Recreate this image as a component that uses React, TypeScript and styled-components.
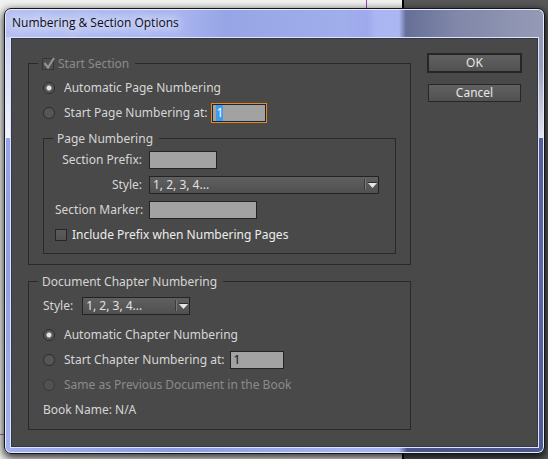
import React, { useEffect, useRef } from "react";
import styled, { createGlobalStyle, css } from "styled-components";

const GlobalStyle = createGlobalStyle`
  *, *::before, *::after { box-sizing: border-box; }
  body { margin: 0; }
  body, button, input, select {
    font-family: "Noto Sans", sans-serif;
    font-size: 12px;
    line-height: 16px;
  }
`;

const Backdrop = styled.div`
  display: flex;
  min-height: 100vh;
  padding: 8px 3px 5px 4px;
  background:
    linear-gradient(90deg, transparent 366px, #9a3fb4 366px 367px, transparent 367px) 0 0 / 100% 9px no-repeat,
    linear-gradient(transparent 434px, #b160c4 434px 435px, transparent 435px) 0 0 / 5px 100% no-repeat,
    linear-gradient(90deg, #f1f1ef 402px, #000 402px 404px, #585858 404px);
`;

const Dialog = styled.section`
  flex: 1;
  display: flex;
  flex-direction: column;
  min-width: 0;
  padding: 0 5px 5px;
  border: 1px solid #14161f;
  border-radius: 7px;
  background:
    linear-gradient(#cdd3f4, #f2f3fb 101px, #94a4e6 101px, #8f9fe0 232px, #a7b5f0) 0 28px / 6px 100% no-repeat,
    linear-gradient(#949ab8, #9aa0ba 30px, #e2e4ee 101px, #525f98 101px, #5b68a4 232px, #4c5890) 100% 28px / 6px 100% no-repeat,
    linear-gradient(90deg, #a3b1ee, #8b9be0 170px, #a5b3f0 340px, #a5b3f0 394px, #4b5688 402px, #4d588c) 0 100% / 100% 6px no-repeat,
    linear-gradient(90deg, #b5c0f2, #aab6f0 170px, #97a5e6 220px, #a0aeec 340px, #9fa8ec 362px, #a9b6f2 370px, #aab7f2 394px, #666f98 401px, #8087a8 450px, #959bb6);
  box-shadow: inset 0 0 0 1px #e8ebfb, 0 3px 8px 1px rgba(0, 0, 0, 0.8);
`;

const TitleBar = styled.header`
  display: flex;
  align-items: center;
  height: 28px;
  padding: 0 2px;
`;

const Title = styled.h1`
  margin: 0;
  font: 400 12px/16px "Open Sans", "Noto Sans", sans-serif;
  color: #0b0c14;
  text-shadow: 0 0 8px #e6eafd, 0 0 10px #e6eafd, 0 0 12px #e6eafd;
`;

const Body = styled.form`
  flex: 1;
  display: flex;
  align-items: flex-start;
  gap: 16px;
  padding: 15px 16px 14px 17px;
  border: 1px solid #dfe4fa;
  background: #494949;
  box-shadow: inset 0 0 0 1px #33374a;
  color: #d6d6d6;
`;

const Options = styled.div`
  flex: 1;
  min-width: 0;
  display: flex;
  flex-direction: column;
  gap: 8px;
  padding-top: 2px;
`;

const Group = styled.fieldset<{ $nested?: boolean }>`
  min-width: 0;
  margin: ${(p) => (p.$nested ? "5px 0 3px" : "0")};
  padding: ${(p) => (p.$nested ? "0 11px 6px" : "3px 14px 7px")};
  border: 1px solid #292929;
`;

const Legend = styled.legend<{ $nested?: boolean }>`
  display: flex;
  align-items: center;
  gap: 4px;
  height: 17px;
  margin-left: ${(p) => (p.$nested ? "-2px" : "-5px")};
  padding: 0 6px 0 4px;
  white-space: nowrap;
`;

const Row = styled.div<{ $gap?: number }>`
  display: flex;
  align-items: center;
  gap: ${(p) => p.$gap ?? 5}px;
  height: 25px;
`;

const RadioGroup = styled.div`
  padding-top: 4px;
`;

const Label = styled.label<{ $dim?: boolean; $bright?: boolean }>`
  color: ${(p) => (p.$dim ? "#8b8b8b" : p.$bright ? "#ededed" : "#d6d6d6")};
  white-space: nowrap;
`;

const FieldLabel = styled(Label)`
  width: 87px;
  text-align: right;
`;

const Radio = styled.input.attrs({ type: "radio" })`
  appearance: none;
  flex: none;
  width: 12px;
  height: 12px;
  margin: 0 4px 0 0;
  border: 1px solid #2c2c2c;
  border-radius: 50%;
  background: #565656;
  &:checked {
    background: radial-gradient(circle, #e4e4e4 0 2px, #585858 3px);
  }
  &:disabled {
    border-color: #3a3a3a;
    background: #505050;
  }
`;

const CheckFrame = styled.span`
  position: relative;
  display: flex;
  flex: none;
`;

const CheckInput = styled.input.attrs({ type: "checkbox" })`
  appearance: none;
  width: 12px;
  height: 12px;
  margin: 0;
  border: 1px solid #262626;
  background: linear-gradient(#5c5c5c, #525252);
  &:disabled {
    border-color: #363636;
    background: #4d4d4d;
  }
`;

const Tick = styled.svg`
  position: absolute;
  left: 0;
  top: -2px;
  width: 14px;
  height: 14px;
  pointer-events: none;
`;

const fieldBox = css`
  height: 18px;
  margin: 0;
  border: 1px solid #232323;
  border-radius: 0;
  outline: none;
`;

const TextField = styled.input.attrs({ type: "text" })<{ $width: number }>`
  ${fieldBox}
  width: ${(p) => p.$width}px;
  padding: 0 3px;
  background: #a2a2a2;
  color: #10101c;
  &:focus { box-shadow: 0 0 0 1px #e28a2b; }
  &::selection { background: #3f9bf0; color: #fff; }
`;

const SelectFrame = styled.span<{ $width: number }>`
  position: relative;
  display: flex;
  width: ${(p) => p.$width}px;
`;

const Select = styled.select`
  ${fieldBox}
  appearance: none;
  width: 100%;
  padding: 0 20px 0 3px;
  background: linear-gradient(#5f5f5f, #505050);
  color: #e2e2e2;
`;

const Arrow = styled.svg`
  position: absolute;
  top: 0;
  right: 0;
  width: 16px;
  height: 18px;
  pointer-events: none;
`;

const Actions = styled.div`
  display: flex;
  flex-direction: column;
  align-items: center;
  gap: 11px;
  width: 95px;
`;

const Button = styled.button<{ $primary?: boolean }>`
  width: ${(p) => (p.$primary ? "95px" : "93px")};
  height: ${(p) => (p.$primary ? "20px" : "18px")};
  padding: 0;
  border: ${(p) => (p.$primary ? "2px" : "1px")} solid #262626;
  background: linear-gradient(#616161, #515151);
  color: #e6e6e6;
  line-height: 14px;
`;

function NumberStyleSelect({ id, width }: { id: string; width: number }) {
  return (
    <SelectFrame $width={width}>
      <Select id={id} defaultValue="arabic">
        <option value="arabic">1, 2, 3, 4...</option>
        <option value="roman">I, II, III, IV...</option>
        <option value="alpha">A, B, C, D...</option>
      </Select>
      <Arrow viewBox="0 0 16 18" aria-hidden="true">
        <path d="M1.500 3v11" stroke="#3a3a3a" />
        <path d="M2.500 3v11" stroke="#777" />
        <path d="M5 6.500h9" stroke="#2e2e2e" />
        <path d="M5 7h9l-4.500 5z" fill="#e6e6e6" />
      </Arrow>
    </SelectFrame>
  );
}

export default function App() {
  const startPage = useRef<HTMLInputElement>(null);

  useEffect(() => {
    startPage.current?.focus();
    startPage.current?.select();
  }, []);

  return (
    <>
      <GlobalStyle />
      <Backdrop>
        <Dialog role="dialog" aria-labelledby="dialog-title">
          <TitleBar>
            <Title id="dialog-title">Numbering &amp; Section Options</Title>
          </TitleBar>
          <Body onSubmit={(e) => e.preventDefault()}>
            <Options>
              <Group>
                <Legend>
                  <CheckFrame>
                    <CheckInput id="start-section" defaultChecked disabled />
                    <Tick viewBox="0 0 14 14" aria-hidden="true">
                      <path d="M2.500 7l3.500 4.500L12 2" fill="none" stroke="#929292" strokeWidth="2.200" />
                    </Tick>
                  </CheckFrame>
                  <Label $dim htmlFor="start-section">Start Section</Label>
                </Legend>
                <Row>
                  <Radio id="auto-page" name="page" defaultChecked />
                  <Label htmlFor="auto-page">Automatic Page Numbering</Label>
                </Row>
                <Row>
                  <Radio id="start-page" name="page" />
                  <Label htmlFor="start-page">Start Page Numbering at:</Label>
                  <TextField ref={startPage} $width={54} defaultValue="1" aria-label="Start page number" />
                </Row>
                <Group $nested>
                  <Legend $nested>Page Numbering</Legend>
                  <Row $gap={7}>
                    <FieldLabel htmlFor="prefix">Section Prefix:</FieldLabel>
                    <TextField id="prefix" $width={68} />
                  </Row>
                  <Row $gap={7}>
                    <FieldLabel htmlFor="page-style">Style:</FieldLabel>
                    <NumberStyleSelect id="page-style" width={230} />
                  </Row>
                  <Row $gap={7}>
                    <FieldLabel htmlFor="marker">Section Marker:</FieldLabel>
                    <TextField id="marker" $width={108} />
                  </Row>
                  <Row>
                    <CheckInput id="include-prefix" />
                    <Label $bright htmlFor="include-prefix">Include Prefix when Numbering Pages</Label>
                  </Row>
                </Group>
              </Group>
              <Group>
                <Legend>Document Chapter Numbering</Legend>
                <Row $gap={9}>
                  <Label htmlFor="chapter-style">Style:</Label>
                  <NumberStyleSelect id="chapter-style" width={108} />
                </Row>
                <RadioGroup>
                  <Row>
                    <Radio id="auto-chapter" name="chapter" defaultChecked />
                    <Label htmlFor="auto-chapter">Automatic Chapter Numbering</Label>
                  </Row>
                  <Row>
                    <Radio id="start-chapter" name="chapter" />
                    <Label htmlFor="start-chapter">Start Chapter Numbering at:</Label>
                    <TextField $width={54} defaultValue="1" aria-label="Start chapter number" />
                  </Row>
                  <Row>
                    <Radio id="same-chapter" name="chapter" disabled />
                    <Label $dim htmlFor="same-chapter">Same as Previous Document in the Book</Label>
                  </Row>
                </RadioGroup>
                <Row>Book Name: N/A</Row>
              </Group>
            </Options>
            <Actions>
              <Button $primary type="submit">OK</Button>
              <Button type="button">Cancel</Button>
            </Actions>
          </Body>
        </Dialog>
      </Backdrop>
    </>
  );
}
